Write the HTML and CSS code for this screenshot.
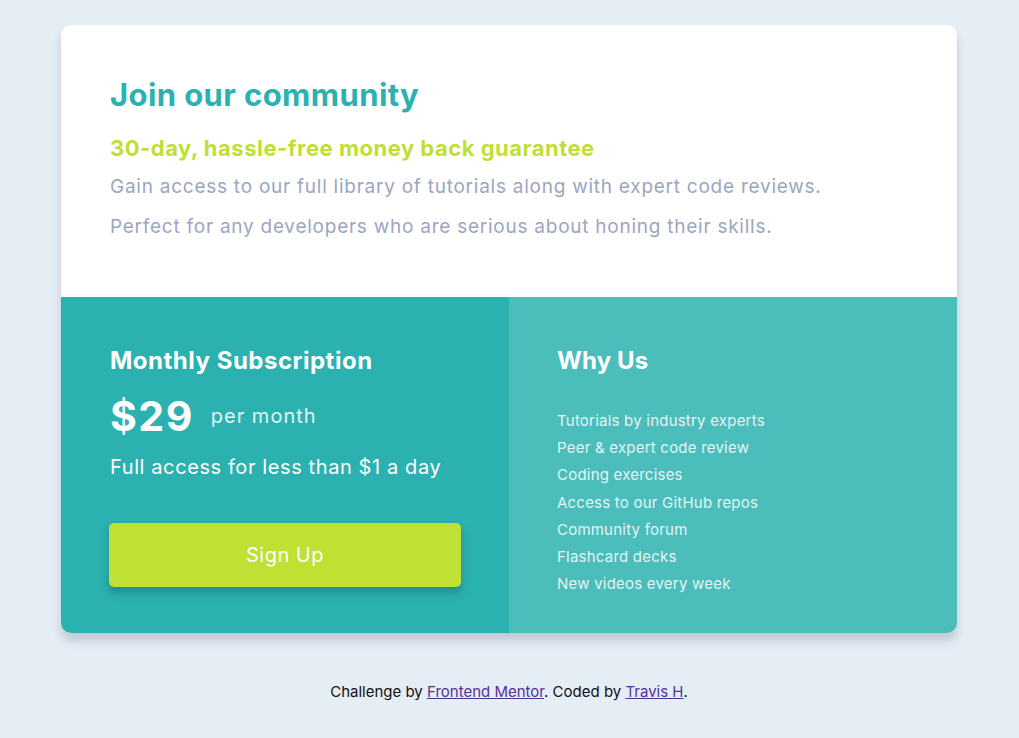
FILE: index.html
```html
<!DOCTYPE html>
<html lang="en">
<head>
<meta charset="utf-8">
<title>Single price grid component</title>
<link rel="stylesheet" href="styles.css">
</head>
<body>
<main class="card">
  <section class="intro">
    <h1 class="intro-title">Join our community</h1>
    <h2 class="intro-sub">30-day, hassle-free money back guarantee</h2>
    <p class="intro-text"><span class="line">Gain access to our full library of tutorials along with expert code reviews.</span><span class="line">Perfect for any developers who are serious about honing their skills.</span></p>
  </section>
  <div class="bottom">
    <section class="sub">
      <h2 class="col-title">Monthly Subscription</h2>
      <div class="price"><span class="amount">$29</span><span class="per">per month</span></div>
      <p class="access">Full access for less than $1 a day</p>
      <button class="btn">Sign Up</button>
    </section>
    <section class="why">
      <h2 class="col-title col-title-why">Why Us</h2>
      <ul class="why-list">
        <li>Tutorials by industry experts</li>
        <li>Peer &amp; expert code review</li>
        <li>Coding exercises</li>
        <li>Access to our GitHub repos</li>
        <li>Community forum</li>
        <li>Flashcard decks</li>
        <li>New videos every week</li>
      </ul>
    </section>
  </div>
</main>
<footer class="attribution">
  Challenge by <a href="#">Frontend Mentor</a>. Coded by <a href="#">Travis H</a>.
</footer>
</body>
</html>
```

FILE: styles.css
```css
* { box-sizing: border-box; margin: 0; padding: 0; }

body {
  background: #e5edf5;
  font-family: "Inter", "Open Sans", sans-serif;
  padding: 25px 1px 0 0;
  min-height: 738px;
}

.card {
  width: 896px;
  margin: 0 auto;
  border-radius: 10px;
  overflow: hidden;
  background: #fff;
  box-shadow: 0 8px 10px rgba(60, 80, 110, 0.22);
}

.intro {
  height: 272px;
  padding: 50px 48px 0 49px;
}

.intro-title {
  color: #2bb1af;
  font-size: 31px;
  font-weight: 700;
  line-height: 40px;
  letter-spacing: 0.4px;
}

.intro-sub {
  margin-top: 20px;
  color: #c0df34;
  font-size: 22px;
  font-weight: 700;
  line-height: 26px;
  letter-spacing: 0.5px;
}

.intro-text {
  margin-top: 6px;
  color: #9ba6bf;
  font-size: 19px;
  line-height: 40px;
  letter-spacing: 0.75px;
}

.line { display: block; }

.bottom {
  display: grid;
  grid-template-columns: 448px 448px;
  height: 336px;
}

.sub {
  background: #2bb1af;
  padding: 48px 48px 0 49px;
  color: #fff;
}

.why {
  background: #4bbdbb;
  padding: 48px 48px 0 48px;
  color: #fff;
}

.col-title {
  font-size: 24px;
  font-weight: 700;
  line-height: 32px;
  letter-spacing: 0.5px;
}

.col-title-why { letter-spacing: 0.1px; }

.price {
  display: flex;
  align-items: center;
  margin-top: 15px;
}

.amount {
  font-size: 41px;
  font-weight: 700;
  line-height: 48px;
  letter-spacing: 1.5px;
}

.per {
  margin-left: 17px;
  font-size: 20px;
  color: #e4f6f6;
  letter-spacing: 1px;
}

.access {
  margin-top: 13px;
  font-size: 20px;
  line-height: 28px;
  letter-spacing: 0.6px;
}

.btn {
  display: block;
  margin-top: 42px;
  margin-left: -1px;
  width: 352px;
  height: 64px;
  border: none;
  border-radius: 5px;
  background: #bfe133;
  color: #fff;
  font-family: inherit;
  font-size: 20px;
  letter-spacing: 0.5px;
  box-shadow: 0 6px 8px rgba(20, 100, 100, 0.45);
}

.why-list {
  list-style: none;
  margin-top: 30px;
  color: #e3f5f5;
  font-size: 15px;
  line-height: 27.2px;
  letter-spacing: 0.22px;
}

.attribution {
  margin-top: 49px;
  text-align: center;
  font-size: 15px;
  color: #111;
}

.attribution a { color: #55309a; }
```
